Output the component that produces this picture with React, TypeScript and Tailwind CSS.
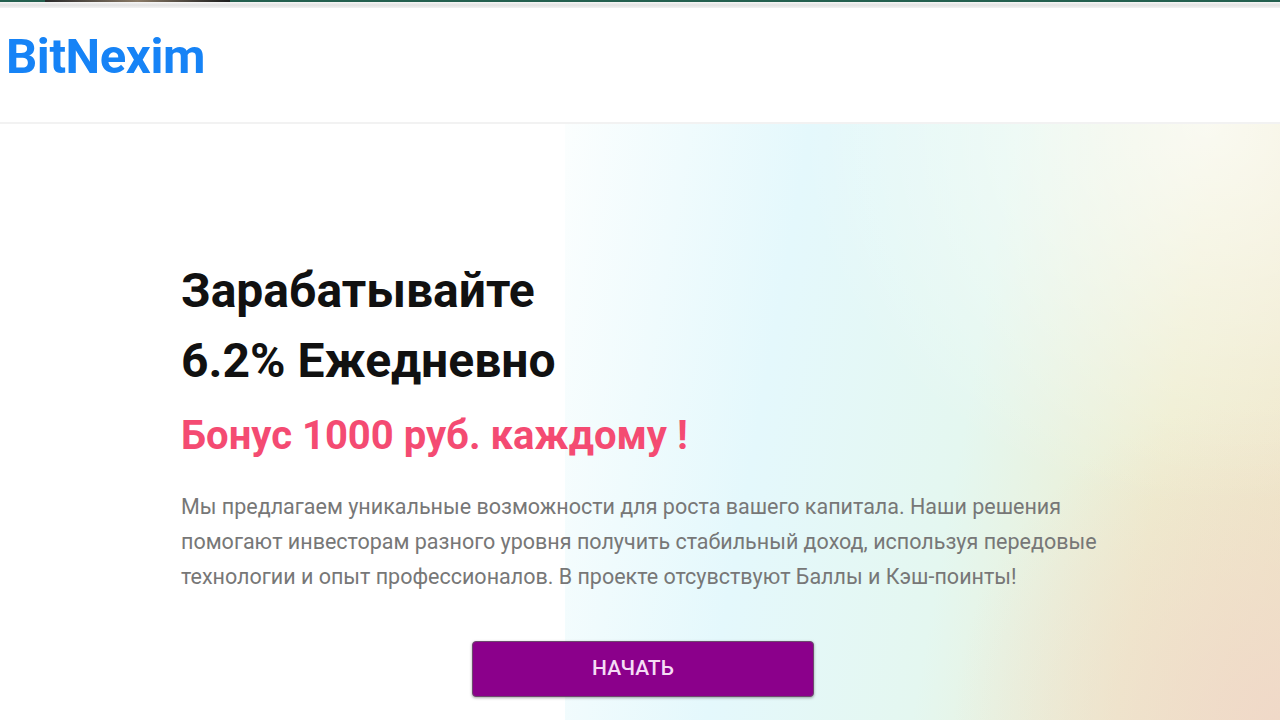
import React from "react";

export default function App() {
  return (
    <div className="w-[1280px] h-[720px] overflow-hidden bg-white" style={{ fontFamily: "Roboto, 'Noto Sans', sans-serif" }}>
      {/* top strip */}
      <div className="flex h-[2px]">
        <div className="w-[45px] bg-[#24604f]" />
        <div className="w-[185px] bg-gradient-to-r from-[#2b2b2b] via-[#8a7a66] to-[#1e1e1e]" />
        <div className="flex-1 bg-[#24604f]" />
      </div>
      <div className="h-[6px] bg-gradient-to-b from-[#f6f6f6] via-[#e2e2e2] to-[#f3f3f3]" />
      {/* header */}
      <header className="h-[116px] bg-white flex items-start border-b-2 border-[#f2f2f2]">
        <div className="pl-[6px] pt-[20px] text-[49px] leading-[58px] font-bold text-[#1683f6] tracking-[-0.4px]">BitNexim</div>
      </header>
      {/* hero */}
      <section className="relative h-[600px] flex">
        <div className="absolute inset-y-0 left-[565px] right-0 bg-[linear-gradient(100deg,#fbfefe_0%,#e4f8fc_30%,#e4f7f0_55%,#eeedcf_80%,#efe6c8_100%)]" />
        <div className="absolute inset-y-0 left-[565px] right-0 bg-[radial-gradient(circle_at_100%_100%,rgba(240,215,200,0.9)_0%,rgba(240,215,200,0)_35%)]" />
        <div className="absolute inset-y-0 left-[565px] right-0 bg-[radial-gradient(ellipse_at_90%_0%,rgba(255,255,255,0.7)_0%,rgba(255,255,255,0)_45%)]" />
        <div className="relative ml-[181px] w-[924px] pt-[132px] flex flex-col">
          <h1 className="text-[48px] leading-[70px] font-bold text-[#111]">Зарабатывайте</h1>
          <h1 className="text-[48px] leading-[70px] font-bold text-[#111]">6.2% Ежедневно</h1>
          <h2 className="mt-[5px] text-[40px] leading-[70px] font-bold text-[#f44b72]">Бонус 1000 руб. каждому !</h2>
          <p className="mt-[18px] text-[21.5px] leading-[35px] text-[#777777]">
            Мы предлагаем уникальные возможности для роста вашего капитала. Наши решения помогают инвесторам разного уровня получить стабильный доход, используя передовые технологии и опыт профессионалов. В проекте отсувствуют Баллы и Кэш-поинты!
          </p>
          <div className="mt-[47px] flex justify-center">
            <button className="w-[342px] h-[56px] pr-[20px] rounded-[4px] bg-[#8b008b] border border-[#6d4a6d] shadow-[0_1px_3px_rgba(0,0,0,0.35)] text-[21px] font-medium text-[#f5dcf5]">
              НАЧАТЬ
            </button>
          </div>
        </div>
      </section>
    </div>
  );
}
